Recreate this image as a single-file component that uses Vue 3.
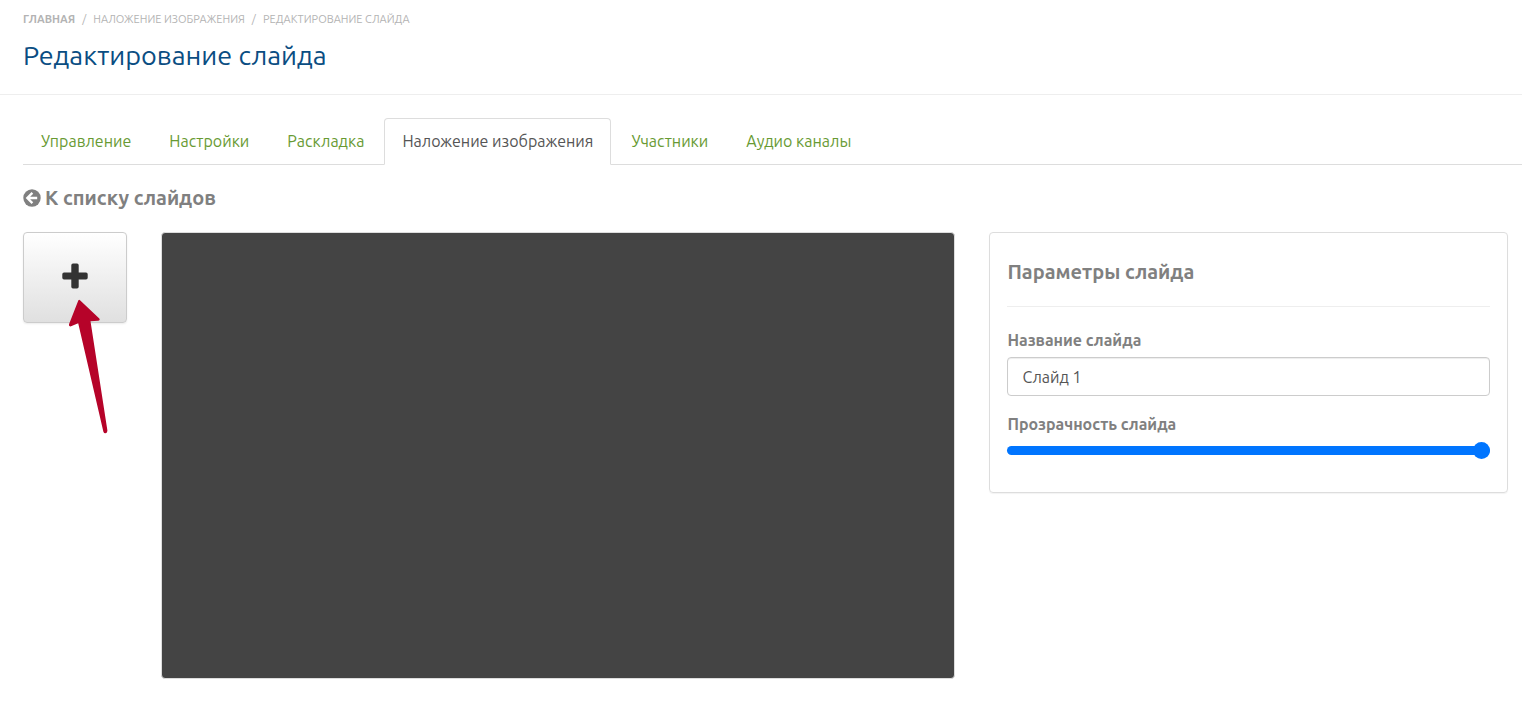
<script setup>
import { ref } from 'vue'

const tabs = ['Управление', 'Настройки', 'Раскладка', 'Наложение изображения', 'Участники', 'Аудио каналы']
const activeTab = ref('Наложение изображения')
const slideName = ref('Слайд 1')
const opacity = ref(100)
</script>

<template>
  <div class="page">
    <header class="header">
      <nav class="breadcrumbs" aria-label="Навигация">
        <a href="#" class="home">Главная</a>
        <span class="sep">/</span>
        <a href="#">Наложение изображения</a>
        <span class="sep">/</span>
        <span>Редактирование слайда</span>
      </nav>
      <h1>Редактирование слайда</h1>
    </header>

    <nav class="tabs">
      <a
        v-for="tab in tabs"
        :key="tab"
        href="#"
        class="tab"
        :class="{ active: tab === activeTab }"
        @click.prevent="activeTab = tab"
      >{{ tab }}</a>
    </nav>

    <main class="main">
      <a href="#" class="back">
        <svg viewBox="0 0 18 18" aria-hidden="true">
          <circle cx="9" cy="9" r="8.7" fill="currentColor" />
          <path d="M9.4 3.9 4.3 9l5.1 5.1M5 9h9.2" fill="none" stroke="#fff" stroke-width="2.3" />
        </svg>
        <span>К списку слайдов</span>
      </a>

      <div class="workspace">
        <div class="tools">
          <button type="button" class="add" aria-label="Добавить">
            <svg viewBox="0 0 26 26" aria-hidden="true">
              <path d="M11 0.5h4a1.7 1.7 0 0 1 1.7 1.7v7.3h7.3a1.7 1.7 0 0 1 1.7 1.7v3.6a1.7 1.7 0 0 1-1.7 1.7h-7.3v7.3a1.7 1.7 0 0 1-1.7 1.7h-4a1.7 1.7 0 0 1-1.7-1.7v-7.3H2a1.7 1.7 0 0 1-1.7-1.7v-3.6A1.7 1.7 0 0 1 2 9.500h7.300V2.200A1.700 1.700 0 0 1 11 0.500z" fill="#333" />
            </svg>
          </button>
          <svg class="pointer" viewBox="0 0 40 136" aria-hidden="true">
            <path d="M12 1.200 31.300 19.500Q32.500 21.400 30 21.700L22.500 22.300 39.400 131.500Q39.500 134 37.500 134.300Q36 134.500 35.400 132.700L10.200 24.300 3 27.300Q0.500 27.800 1 25.300L10.300 1.600Q11 0 12 1.200Z" fill="#b60329" />
          </svg>
        </div>

        <div class="canvas"></div>

        <section class="panel">
          <h2>Параметры слайда</h2>
          <label for="slide-name">Название слайда</label>
          <input id="slide-name" v-model="slideName" type="text" class="field" />
          <label for="slide-opacity">Прозрачность слайда</label>
          <input
            id="slide-opacity"
            v-model="opacity"
            type="range"
            min="0"
            max="100"
            class="slider"
            :style="{ '--fill': opacity + '%' }"
          />
        </section>
      </div>
    </main>
  </div>
</template>

<style>
body {
  background: #fff;
}
</style>

<style scoped>
.page,
.page * {
  box-sizing: border-box;
}
.page {
  font-family: Ubuntu, "Noto Sans", "Open Sans", sans-serif;
  font-size: 16px;
  line-height: 22px;
  color: #808080;
}
a {
  text-decoration: none;
  color: inherit;
}
.header {
  padding: 10px 23px 22px;
  border-bottom: 1px solid #eee;
}
.breadcrumbs {
  display: flex;
  gap: 7px;
  font-size: 11px;
  line-height: 18px;
  text-transform: uppercase;
  color: #b3b3b3;
}
.home {
  font-weight: 700;
}
h1 {
  margin: 10px 0 0;
  font-size: 27px;
  line-height: 34px;
  font-weight: 400;
  color: #0a4d82;
}
.tabs {
  display: flex;
  gap: 2px;
  margin: 23px 0 0 23px;
  border-bottom: 1px solid #ddd;
}
.tab {
  padding: 11px 17px 12px;
  margin-bottom: -1px;
  border: 1px solid transparent;
  border-radius: 4px 4px 0 0;
  color: #689a33;
}
.tab.active {
  color: #555;
  background: #fff;
  border-color: #ddd #ddd #fff;
}
.main {
  padding: 19px 14px 30px 23px;
}
.back {
  display: inline-flex;
  align-items: center;
  gap: 4px;
  font-size: 20px;
  line-height: 28px;
  font-weight: 600;
}
.back svg {
  width: 18px;
  height: 18px;
}
.workspace {
  display: grid;
  grid-template-columns: 104px 795fr 519fr;
  align-items: start;
  column-gap: 34px;
  margin-top: 20px;
}
.tools {
  position: relative;
}
.add {
  display: flex;
  align-items: center;
  justify-content: center;
  width: 100%;
  height: 91px;
  padding: 0 0 4px;
  border: 1px solid #ccc;
  border-radius: 4px;
  background: linear-gradient(#fff, #e0e0e0);
  box-shadow: 0 1px 2px rgba(0, 0, 0, 0.08);
}
.add svg {
  width: 26px;
  height: 26px;
}
.pointer {
  position: absolute;
  left: 45px;
  top: 67px;
  width: 40px;
  height: 136px;
}
.canvas {
  aspect-ratio: 16 / 9;
  background: #444;
  border: 1px solid #ddd;
  border-radius: 4px;
}
.panel {
  padding: 24px 17px 33px;
  border: 1px solid #ddd;
  border-radius: 4px;
  box-shadow: 0 1px 1px rgba(0, 0, 0, 0.05);
}
h2 {
  margin: 0 0 22px;
  padding-bottom: 19px;
  border-bottom: 1px solid #eee;
  font-size: 20px;
  line-height: 30px;
  font-weight: 600;
}
label {
  display: block;
  margin-bottom: 6px;
  font-weight: 700;
}
.field {
  display: block;
  width: 100%;
  height: 39px;
  margin-bottom: 17px;
  padding: 0 14px;
  border: 1px solid #ccc;
  border-radius: 4px;
  box-shadow: inset 0 1px 1px rgba(0, 0, 0, 0.075);
  background: #fff;
  font: inherit;
  color: #555;
}
.slider {
  appearance: none;
  display: block;
  width: 100%;
  height: 18px;
  margin: 0;
  background: transparent;
}
.slider::-webkit-slider-runnable-track {
  height: 9px;
  border-radius: 5px;
  background: linear-gradient(to right, #0075ff var(--fill), #efefef var(--fill));
}
.slider::-webkit-slider-thumb {
  appearance: none;
  width: 17px;
  height: 17px;
  margin-top: -4px;
  border-radius: 50%;
  background: #0075ff;
}
</style>
